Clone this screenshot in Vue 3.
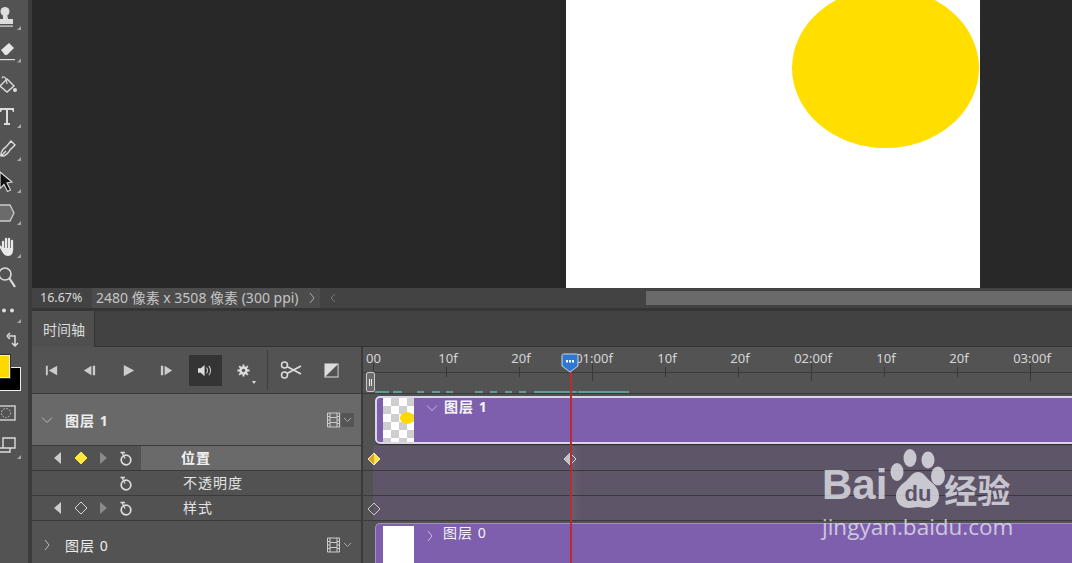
<script setup>
const rulerLabels = [
  { x: 373, text: '00', major: true },
  { x: 446, text: '10f' },
  { x: 519, text: '20f' },
  { x: 592, text: '01:00f', major: true },
  { x: 665, text: '10f' },
  { x: 738, text: '20f' },
  { x: 811, text: '02:00f', major: true },
  { x: 884, text: '10f' },
  { x: 957, text: '20f' },
  { x: 1030, text: '03:00f', major: true },
]

// teal cached-frame dashes under the ruler [start, end]
const dashes = [
  [375, 389], [393, 402], [417, 424], [432, 440], [446, 453],
  [475, 483], [490, 497], [505, 512], [519, 526], [534, 577], [578, 629],
]

const props = [
  { label: '位置', nav: true, key: 'on', active: true },
  { label: '不透明度', nav: false },
  { label: '样式', nav: true, key: 'off' },
]

const RIGHT = 363
</script>

<template>
  <div class="app">
    <aside class="tools">
      <div class="tool">
        <svg viewBox="0 0 28 32"><circle cx="5" cy="8.500" r="4.500" fill="#ddd"/><path d="M3 11h4l1 5h5v5H-3v-5h6z" fill="#ddd"/><rect x="-3" y="22.500" width="16" height="1.200" fill="#ddd"/><path d="M21 23v4h-4z" fill="#a8a8a8"/></svg>
      </div>
      <div class="tool">
        <svg viewBox="0 0 28 32"><path d="M1 15l8-7 5 5-7 7h-2z" fill="#e4e4e4"/><rect x="-1" y="24" width="16" height="1.200" fill="#ddd"/><path d="M21 23.500v4h-4z" fill="#a8a8a8"/></svg>
      </div>
      <div class="tool">
        <svg viewBox="0 0 28 32"><path d="M0 18l7-7 7 7-7 6z" fill="none" stroke="#ddd" stroke-width="1.400"/><path d="M2 10c1-2 3-1 4 1l1 5" fill="none" stroke="#ddd" stroke-width="1.200"/><circle cx="15" cy="22" r="2" fill="#ddd"/></svg>
      </div>
      <div class="tool">
        <svg viewBox="0 0 28 32"><path d="M0 8h14v4h-1l-1-2H8v13h2v2H4v-2h2V10H2l-1 2H0z" fill="#ddd"/><path d="M21 24v4h-4z" fill="#a8a8a8"/></svg>
      </div>
      <div class="tool">
        <svg viewBox="0 0 28 32"><path d="M1 23c-1-4 3-8 5-9l5-6 4 4-5 5c-1 2-5 7-9 6z M1 23l5-5" fill="none" stroke="#ddd" stroke-width="1.400"/><path d="M21 24v4h-4z" fill="#a8a8a8"/></svg>
      </div>
      <div class="tool">
        <svg viewBox="0 0 28 32"><path d="M0 7l12 10-5 1 3.500 7-3 1.500-3.500-7-4 4z" fill="#111" stroke="#ddd" stroke-width="1.100"/><path d="M21 24v4h-4z" fill="#a8a8a8"/></svg>
      </div>
      <div class="tool">
        <svg viewBox="0 0 28 32"><path d="M-3 8h13l4 8-4 8H-3z" fill="#6b6b6b" stroke="#ccc" stroke-width="1.300"/><path d="M21 24v4h-4z" fill="#a8a8a8"/></svg>
      </div>
      <div class="tool">
        <svg viewBox="0 0 28 32">
          <path d="M3 12V21M6 9V20M9 9V20M12 11V20" stroke="#e8e8e8" stroke-width="2.300" stroke-linecap="round"/>
          <path d="M1 16c-1-1-2 0-1 2l3 5c1 2 3 3 5 3 3 0 5-2 5-6v-2H3z" fill="#e8e8e8"/>
          <path d="M21 24v4h-4z" fill="#a8a8a8"/>
        </svg>
      </div>
      <div class="tool">
        <svg viewBox="0 0 28 32"><circle cx="5" cy="12" r="6" fill="none" stroke="#ddd" stroke-width="1.600"/><path d="M9.500 16.500l5.500 8.500" stroke="#ddd" stroke-width="2.200"/></svg>
      </div>
      <div class="tool">
        <svg viewBox="0 0 28 32"><circle cx="4" cy="15.500" r="2" fill="#ddd"/><circle cx="12" cy="15.500" r="2" fill="#ddd"/><path d="M21 24v4h-4z" fill="#a8a8a8"/></svg>
      </div>
      <div class="swap">
        <svg viewBox="0 0 28 20"><path d="M9 5h6v9M7 5l3-3M7 5l3 3M12 12l3 3 3-3" fill="none" stroke="#ddd" stroke-width="1.500"/></svg>
      </div>
      <div class="swatches">
        <span class="bg-swatch"></span>
        <span class="fg-swatch"></span>
      </div>
      <div class="mask">
        <svg viewBox="0 0 28 20"><rect x="-3" y="3" width="18" height="14" fill="none" stroke="#ccc" stroke-width="1.500"/><circle cx="6" cy="10" r="4.500" fill="none" stroke="#ccc" stroke-dasharray="1.500 1.500"/></svg>
      </div>
      <div class="tool">
        <svg viewBox="0 0 28 32"><path d="M3 8h12v10H3z M0 18h3 M0 22h10v-4" fill="none" stroke="#ddd" stroke-width="1.400"/><path d="M21 25v4h-4z" fill="#a8a8a8"/></svg>
      </div>
    </aside>

    <main class="main">
      <section class="canvas">
        <div class="page">
          <div class="ball"></div>
        </div>
      </section>

      <footer class="status">
        <span class="pct">16.67%</span>
        <span class="doc">2480 像素 x 3508 像素 (300 ppi)</span>
        <span class="more">
          <svg width="8" height="12" viewBox="0 0 8 12"><path d="M2 1l4 5-4 5" fill="none" stroke="#aaa"/></svg>
        </span>
        <div class="scroll">
          <svg class="scroll-left" width="8" height="12" viewBox="0 0 8 12"><path d="M6 2L2 6l4 4" fill="none" stroke="#777"/></svg>
          <div class="thumb"></div>
        </div>
      </footer>

      <section class="panel">
        <div class="tabs"><div class="tab">时间轴</div></div>

        <div class="grid">
          <div class="ctrl left">
            <button class="btn"><svg viewBox="0 0 16 16"><path d="M2 3h2v10H2zM14 3v10L5 8z" fill="#ccc"/></svg></button>
            <button class="btn"><svg viewBox="0 0 16 16"><path d="M10 3v10L2 8zM11.500 3h2.500v10h-2.500z" fill="#ccc"/></svg></button>
            <button class="btn"><svg viewBox="0 0 16 16"><path d="M3 2l11 6-11 6z" fill="#ccc"/></svg></button>
            <button class="btn"><svg viewBox="0 0 16 16"><path d="M2 3h2.500v10H2zM6 3l8 5-8 5z" fill="#ccc"/></svg></button>
            <button class="btn"><span class="audio"><svg viewBox="0 0 18 16"><path d="M1 5.500h3L8 2v12l-4-3.500H1z" fill="#ddd"/><path d="M10 5c1.500 1.500 1.500 4.500 0 6M12.500 3c2.500 2.500 2.500 7.500 0 10" fill="none" stroke="#ccc" stroke-width="1.100"/></svg></span></button>
            <button class="btn gear">
              <svg viewBox="0 0 16 16"><path d="M8 1.500v13M1.500 8h13M3.400 3.400l9.200 9.200M12.600 3.400l-9.200 9.200" stroke="#ddd" stroke-width="2"/><circle cx="8" cy="8" r="4.500" fill="#ddd"/><circle cx="8" cy="8" r="1.800" fill="#535353"/></svg>
              <i class="caret"></i>
            </button>
            <span class="divider"></span>
            <button class="btn wide"><svg viewBox="0 0 22 18" class="big"><circle cx="4.500" cy="4" r="3" fill="none" stroke="#ddd" stroke-width="1.500"/><circle cx="4.500" cy="14" r="3" fill="none" stroke="#ddd" stroke-width="1.500"/><path d="M7 5.500L21 13M7 12.500L21 5" stroke="#ddd" stroke-width="1.600"/></svg></button>
            <button class="btn wide"><svg viewBox="0 0 16 16"><rect x="0.500" y="0.500" width="15" height="15" fill="#dcdcdc"/><path d="M14.500 1.500v13h-13z" fill="#535353"/></svg></button>
          </div>
          <div class="ruler right">
            <template v-for="l in rulerLabels" :key="l.x">
              <span class="ruler-text" :style="{ left: l.x - RIGHT + 2 + 'px' }">{{ l.text }}</span>
              <i class="tick" :class="{ major: l.major }" :style="{ left: l.x - RIGHT + 'px' }"></i>
            </template>
            <div class="ruler-line"></div>
            <i v-for="d in dashes" :key="d[0]" class="dash" :style="{ left: d[0] - RIGHT + 'px', width: d[1] - d[0] + 'px' }"></i>
            <div class="handle"><b></b><b></b></div>
          </div>

          <div class="layer left active">
            <span class="twist"><svg width="12" height="8" viewBox="0 0 12 8"><path d="M1 1.500l5 5 5-5" fill="none" stroke="#bbb"/></svg></span>
            <span class="layer-name strong">图层 1</span>
            <svg class="film" viewBox="0 0 13 16"><path d="M0.500 1h12v14H0.500zM3 1v14M10 1v14M3 5.500h7M3 10.500h7M0.500 4.500H3M0.500 8H3M0.500 11.500H3M10 4.500h2.500M10 8h2.500M10 11.500h2.500" fill="none" stroke="#ccc"/></svg>
            <span class="drop dark"><svg width="9" height="6" viewBox="0 0 9 6"><path d="M1 1l3.500 3.500L8 1" fill="none" stroke="#aaa"/></svg></span>
          </div>
          <div class="right bar-row">
            <div class="clip selected">
              <div class="thumb-pic checker"><span class="mini-ball"></span></div>
              <svg class="clip-twist" width="12" height="8" viewBox="0 0 12 8"><path d="M1 1.500l5 5 5-5" fill="none" stroke="#c9bbdf"/></svg>
              <span class="clip-name strong">图层 1</span>
            </div>
          </div>

          <template v-for="(p, i) in props" :key="p.label">
            <div class="prop left">
              <span class="slot"><svg v-if="p.nav" width="8" height="12" viewBox="0 0 8 12"><path d="M7 0v12L0 6z" fill="#ccc"/></svg></span>
              <span class="slot">
                <svg v-if="p.key" width="14" height="14" viewBox="0 0 14 14"><path d="M7 1L13 7 7 13 1 7z" :fill="p.key === 'on' ? '#ffe83d' : 'none'" :stroke="p.key === 'on' ? '#ffe83d' : '#d4d4d4'"/></svg>
              </span>
              <span class="slot"><svg v-if="p.nav" width="8" height="12" viewBox="0 0 8 12"><path d="M1 0v12l7-6z" fill="#8a8a8a"/></svg></span>
              <span class="slot"><svg width="14" height="15" viewBox="0 0 14 15"><circle cx="7" cy="9" r="4.800" fill="none" stroke="#ddd" stroke-width="1.700"/><path d="M1.500 1.500h4.500M3 1.500l3 6" fill="none" stroke="#ddd" stroke-width="1.300"/></svg></span>
              <span class="prop-label" :class="{ hl: p.active }">{{ p.label }}</span>
            </div>
            <div class="track right">
              <div class="track-fill"></div>
              <template v-if="i === 0">
                <svg class="key" style="left: 4px" width="14" height="14" viewBox="0 0 14 14"><path d="M7 1l6 6-6 6-6-6z" fill="#ffe23a" stroke="#eee"/><path d="M7 1.500L1.500 7 7 12.500z" fill="#d9a822"/></svg>
                <svg class="key" style="left: 200px" width="14" height="14" viewBox="0 0 14 14"><path d="M7 1l6 6-6 6-6-6z" fill="none" stroke="#ddd"/><path d="M7 1.500L1.500 7 7 12.500z" fill="#c4c4c4"/></svg>
              </template>
              <svg v-if="i === 2" class="key" style="left: 4px" width="14" height="14" viewBox="0 0 14 14"><path d="M7 1l6 6-6 6-6-6z" fill="none" stroke="#ccc"/></svg>
            </div>
          </template>

          <div class="layer left last">
            <span class="twist"><svg width="8" height="12" viewBox="0 0 8 12"><path d="M2 1l4 5-4 5" fill="none" stroke="#bbb"/></svg></span>
            <span class="layer-name">图层 0</span>
            <svg class="film" viewBox="0 0 13 16"><path d="M0.500 1h12v14H0.500zM3 1v14M10 1v14M3 5.500h7M3 10.500h7M0.500 4.500H3M0.500 8H3M0.500 11.500H3M10 4.500h2.500M10 8h2.500M10 11.500h2.500" fill="none" stroke="#ccc"/></svg>
            <span class="drop"><svg width="9" height="6" viewBox="0 0 9 6"><path d="M1 1l3.500 3.500L8 1" fill="none" stroke="#aaa"/></svg></span>
          </div>
          <div class="right bar-row">
            <div class="clip">
              <div class="thumb-pic blank"></div>
              <svg class="clip-twist" width="8" height="12" viewBox="0 0 8 12"><path d="M2 1l4 5-4 5" fill="none" stroke="#c9bbdf"/></svg>
              <span class="clip-name">图层 0</span>
            </div>
          </div>
        </div>

        <div class="playhead">
          <svg class="playhead-cap" width="18" height="20" viewBox="0 0 18 20"><path d="M2.500 1h13A1.500 1.500 0 0 1 17 2.500V13l-8 6-8-6V2.500A1.500 1.500 0 0 1 2.500 1z" fill="#2f78d2" stroke="#c9d6e6"/><rect x="5" y="7" width="2" height="2.500" fill="#fff"/><rect x="8" y="7" width="2" height="2.500" fill="#fff"/><rect x="11" y="7" width="2" height="2.500" fill="#fff"/></svg>
        </div>
      </section>
    </main>

    <div class="watermark">
      <div class="wm-top">
        <span class="wm-bai">Bai</span>
        <svg class="paw" viewBox="0 0 56 62">
          <ellipse cx="20" cy="10" rx="6.500" ry="9"/>
          <ellipse cx="38" cy="12" rx="6.500" ry="8.500"/>
          <ellipse cx="7" cy="24" rx="6.500" ry="9"/>
          <ellipse cx="48" cy="28" rx="7" ry="9.500"/>
          <path d="M28 24c5 0 8 5 12 9 5 4 9 8 9 15 0 8-7 12-13 12-3 0-5-1-8-1s-5 1-9 1c-7 0-13-4-13-12 0-7 5-11 10-15 4-4 7-9 12-9z"/>
          <text x="28" y="53" text-anchor="middle" class="paw-du">du</text>
        </svg>
        <span class="wm-cn">经验</span>
      </div>
      <div class="wm-url">jingyan.baidu.com</div>
    </div>
  </div>
</template>

<style>
html, body {
  margin: 0;
  background: #282828;
  overflow: hidden;
}
</style>

<style scoped>
.app {
  position: relative;
  display: flex;
  width: 1072px;
  height: 563px;
  overflow: hidden;
  font-family: "Noto Sans", "Noto Sans CJK SC", sans-serif;
  color: #ddd;
}

.tools {
  width: 28px;
  padding-top: 3px;
  flex-shrink: 0;
  background: #535353;
  border-right: 4px solid #3c3c3c;
}
.tool {
  height: 32.4px;
}
.tool svg {
  display: block;
  width: 28px;
  height: 32px;
  overflow: hidden;
}
.swap {
  height: 20px;
  margin-top: 4px;
}
.swap svg, .mask svg {
  display: block;
  width: 28px;
  height: 20px;
}
.swatches {
  position: relative;
  height: 36px;
  margin-top: 5px;
}
.bg-swatch {
  position: absolute;
  left: 0;
  top: 12px;
  width: 20px;
  height: 22px;
  background: #000;
  box-shadow: 0 0 0 1px #eee;
}
.fg-swatch {
  position: absolute;
  left: 0;
  top: 0;
  width: 9px;
  height: 21px;
  background: #ffd800;
  box-shadow: 0 0 0 1px #eee, 0 0 0 2px #333;
}
.mask {
  height: 20px;
  margin-top: 11px;
  margin-bottom: 7px;
}

.main {
  flex: 1;
  display: flex;
  flex-direction: column;
  min-width: 0;
}

.canvas {
  position: relative;
  height: 288px;
  flex-shrink: 0;
  display: flex;
  background: #282828;
}
.page {
  position: relative;
  width: 414px;
  height: 100%;
  margin-left: 534px;
  background: #fff;
  overflow: hidden;
}
.ball {
  position: absolute;
  left: 226px;
  top: -12px;
  width: 187px;
  height: 160px;
  border-radius: 50%;
  background: #ffde00;
}

.status {
  display: flex;
  height: 20px;
  flex-shrink: 0;
  align-items: stretch;
  font-size: 12.5px;
  line-height: 20px;
  background: #434343;
  border-bottom: 3px solid #353535;
}
.pct {
  width: 52px;
  padding-left: 8px;
  color: #d8d8d8;
}
.doc {
  width: 208px;
  padding-left: 4px;
  background: #4c4c4c;
  color: #c4c4c4;
  font-size: 14px;
  white-space: nowrap;
}
.more {
  display: flex;
  align-items: center;
  justify-content: center;
  width: 16px;
  background: #4c4c4c;
}
.scroll {
  position: relative;
  flex: 1;
  display: flex;
  align-items: center;
}
.scroll-left {
  margin-left: 9px;
}
.thumb {
  position: absolute;
  left: 326px;
  right: 0;
  top: 3px;
  height: 14px;
  background: #6a6a6a;
}

.panel {
  position: relative;
  flex: 1;
  min-height: 0;
  display: flex;
  flex-direction: column;
  background: #424242;
}
.tabs {
  height: 36px;
  flex-shrink: 0;
  background: #424242;
  border-bottom: 1px solid #333;
  box-sizing: border-box;
  display: flex;
}
.tab {
  width: 63px;
  height: 36px;
  box-sizing: border-box;
  padding: 9px 0 0 11px;
  background: #4f4f4f;
  border-right: 1px solid #333;
  font-size: 14px;
  line-height: 20px;
  color: #dcdcdc;
}

.grid {
  flex: 1;
  min-height: 0;
  display: grid;
  grid-template-columns: 331px 1fr;
  grid-template-rows: 47px 52px 25px 25px 25px 48px;
  overflow: hidden;
  background: #535353;
}
.left {
  box-sizing: border-box;
  border-right: 2px solid #3a3a3a;
  border-bottom: 1px solid #3a3a3a;
}
.right {
  position: relative;
  min-width: 0;
  box-sizing: border-box;
}

.ctrl {
  display: flex;
  align-items: center;
  background: #535353;
}
.btn {
  position: relative;
  display: flex;
  align-items: center;
  justify-content: center;
  width: 38.5px;
  height: 100%;
  padding: 0;
  border: 0;
  background: none;
}
.btn svg {
  width: 15px;
  height: 15px;
}
.btn svg.big {
  width: 22px;
  height: 18px;
}
.btn.wide {
  width: 40px;
}
.audio {
  display: flex;
  align-items: center;
  justify-content: center;
  width: 33px;
  height: 31px;
  background: #343434;
}
.audio svg {
  width: 17px;
  height: 15px;
}
.caret {
  position: absolute;
  right: 7px;
  bottom: 9px;
  border-left: 2.5px solid transparent;
  border-right: 2.5px solid transparent;
  border-top: 3px solid #ddd;
}
.divider {
  width: 1px;
  height: 40px;
  margin-left: 4px;
  margin-right: 3px;
  background: #3d3d3d;
}

.ruler {
  background: #535353;
  border-bottom: 1px solid #3a3a3a;
}
.ruler-text {
  position: absolute;
  top: 2px;
  font-size: 13px;
  line-height: 18px;
  color: #d6d6d6;
  transform: translateX(-50%);
  white-space: nowrap;
}
.ruler-text:first-child {
  transform: translateX(-9px);
}
.ruler-line {
  position: absolute;
  left: 0;
  right: 0;
  top: 25px;
  height: 1px;
  background: #3c3c3c;
}
.tick {
  position: absolute;
  top: 20px;
  width: 1px;
  height: 10px;
  background: #383838;
}
.tick.major {
  top: 16px;
  height: 18px;
}
.dash {
  position: absolute;
  top: 44px;
  height: 2px;
  background: #5f9e98;
}
.handle {
  position: absolute;
  left: 3px;
  top: 25px;
  width: 9px;
  height: 20px;
  box-sizing: border-box;
  display: flex;
  gap: 1px;
  align-items: center;
  justify-content: center;
  background: #6a6a6a;
  border: 1px solid #c8c8c8;
  border-radius: 2px;
}
.handle b {
  width: 1px;
  height: 7px;
  background: #eee;
}

.layer {
  display: flex;
  align-items: center;
  background: #535353;
}
.layer.active {
  background: #696969;
}
.layer.last {
  border-bottom: 0;
}
.twist {
  display: flex;
  justify-content: center;
  width: 30px;
}
.layer-name {
  flex: 1;
  margin-left: 3px;
  font-size: 14px;
  letter-spacing: 1px;
  color: #eee;
  white-space: nowrap;
}
.strong {
  font-weight: 700;
}
.film {
  width: 13px;
  height: 16px;
}
.drop {
  display: flex;
  align-items: center;
  justify-content: center;
  width: 13px;
  height: 14px;
  margin: 0 7px 0 1px;
}
.drop.dark {
  background: #555;
}

.prop {
  display: flex;
  align-items: stretch;
  padding-left: 15px;
  font-size: 14px;
  background: #525252;
}
.slot {
  display: flex;
  align-items: center;
  justify-content: center;
  width: 22.5px;
}
.prop-label {
  flex: 1;
  margin-left: 4px;
  padding-left: 42px;
  letter-spacing: 1px;
  line-height: 24px;
  color: #e4e4e4;
}
.prop-label.hl {
  padding-left: 40px;
  background: #6a6a6a;
  font-weight: 700;
  color: #f2f2f2;
}

.track {
  background: #525252;
  border-bottom: 1px solid #3a3a3a;
}
.track-fill {
  position: absolute;
  left: 10px;
  right: 0;
  top: 0;
  bottom: 0;
  background: linear-gradient(90deg, #5f5569 0, #5f5569 197px, #65606f 198px, #5f5569 208px);
}
.key {
  position: absolute;
  top: 6px;
}

.bar-row {
  overflow: hidden;
  background: #525252;
}
.clip {
  position: absolute;
  left: 12px;
  right: -10px;
  top: 2px;
  bottom: 2px;
  background: #7e5fad;
  border-radius: 5px 0 0 5px;
  box-sizing: border-box;
  border-top: 1px solid #a58ccc;
  border-left: 1px solid #a58ccc;
  box-shadow: 0 1px 0 #2f2f2f;
}
.clip:not(.selected) {
  bottom: -8px;
}
.clip.selected {
  border: 2px solid #dcd4ea;
}
.thumb-pic {
  position: absolute;
  left: 7px;
  top: 0;
  bottom: 0;
  width: 31px;
  overflow: hidden;
}
.selected .thumb-pic {
  left: 6px;
}
.checker {
  background: repeating-conic-gradient(#cfcfcf 0 25%, #fff 0 50%) 0 0 / 16px 16px;
}
.blank {
  top: 2px;
  bottom: -8px;
  background: #fff;
}
.mini-ball {
  position: absolute;
  left: 17px;
  top: 14px;
  width: 14px;
  height: 12px;
  border-radius: 50%;
  background: #ffd800;
}
.clip-twist {
  position: absolute;
  left: 49px;
  top: 6px;
}
.clip:not(.selected) .clip-twist {
  left: 50px;
  top: 6px;
}
.clip-name {
  position: absolute;
  left: 67px;
  top: -1px;
  font-size: 14px;
  line-height: 20px;
  letter-spacing: 1px;
  color: #f4f4f4;
  white-space: nowrap;
}

.playhead {
  position: absolute;
  left: 538px;
  top: 57px;
  bottom: 0;
  width: 1.5px;
  background: #b92c34;
}
.playhead-cap {
  position: absolute;
  left: -9px;
  top: -15px;
}

.watermark {
  position: absolute;
  left: 822px;
  top: 448px;
  color: rgba(228, 228, 234, 0.8);
  pointer-events: none;
}
.wm-top {
  display: flex;
  align-items: flex-end;
  height: 62px;
}
.wm-bai {
  font-family: "Liberation Sans", sans-serif;
  font-size: 42px;
  font-weight: 700;
  line-height: 48px;
  margin-bottom: 1px;
}
.paw {
  width: 56px;
  height: 62px;
  margin-left: 3px;
  fill: rgba(228, 228, 234, 0.8);
}
.paw-du {
  font-family: "Liberation Sans", sans-serif;
  font-size: 22px;
  font-weight: 700;
  fill: #5d5268;
}
.wm-cn {
  font-family: "Noto Sans CJK SC", sans-serif;
  font-size: 33px;
  font-weight: 700;
  line-height: 42px;
  margin-left: -2px;
  white-space: nowrap;
}
.wm-url {
  font-family: "Open Sans", sans-serif;
  font-size: 22.500px;
  line-height: 26px;
  margin-top: 4px;
  white-space: nowrap;
}
</style>
